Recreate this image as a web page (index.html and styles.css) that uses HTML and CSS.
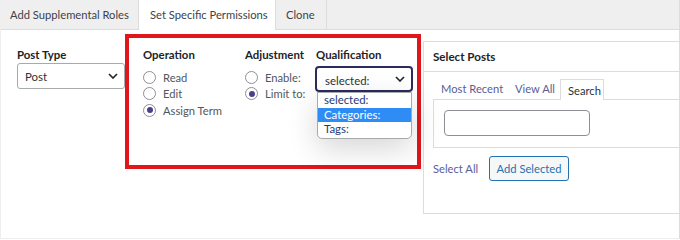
FILE: index.html
```html
<!DOCTYPE html>
<html>
<head>
<meta charset="utf-8">
<link rel="stylesheet" href="styles.css">
</head>
<body>
<div class="frame">
  <nav class="tabs">
    <div class="tab">Add Supplemental Roles</div>
    <div class="tab active">Set Specific Permissions</div>
    <div class="tab">Clone</div>
  </nav>
  <div class="panel">
    <div class="col-post">
      <div class="label">Post Type</div>
      <div class="select post-select">
        <span>Post</span>
        <svg class="chev" width="10" height="6" viewBox="0 0 10 6"><path d="M1 1l4 4 4-4" fill="none" stroke="#1d2327" stroke-width="1.6"/></svg>
      </div>
    </div>
    <div class="highlight">
      <div class="col col-op">
        <div class="label">Operation</div>
        <div class="radios">
          <label class="radio"><span class="dot"></span>Read</label>
          <label class="radio"><span class="dot"></span>Edit</label>
          <label class="radio"><span class="dot on"></span>Assign Term</label>
        </div>
      </div>
      <div class="col col-adj">
        <div class="label">Adjustment</div>
        <div class="radios">
          <label class="radio"><span class="dot"></span>Enable:</label>
          <label class="radio"><span class="dot on"></span>Limit to:</label>
        </div>
      </div>
      <div class="col col-qual">
        <div class="label">Qualification</div>
        <div class="qual-wrap">
          <div class="select qual-select">
            <span>selected:</span>
            <svg class="chev" width="10" height="6" viewBox="0 0 10 6"><path d="M1 1l4 4 4-4" fill="none" stroke="#1d2327" stroke-width="1.6"/></svg>
          </div>
          <ul class="dropdown">
            <li>selected:</li>
            <li class="hl">Categories:</li>
            <li>Tags:</li>
          </ul>
        </div>
      </div>
    </div>
    <div class="posts">
      <div class="posts-head">Select Posts</div>
      <div class="posts-body">
        <div class="ptabs">
          <div class="ptab">Most Recent</div>
          <div class="ptab">View All</div>
          <div class="ptab current">Search</div>
        </div>
        <div class="pbox">
          <div class="search-input"></div>
        </div>
        <div class="actions">
          <span class="link">Select All</span>
          <span class="btn">Add Selected</span>
        </div>
      </div>
    </div>
  </div>
</div>
</body>
</html>
```
FILE: styles.css
```css
* { box-sizing: border-box; }
html, body { margin: 0; padding: 0; background: #fff; }
body {
  font-family: Lato, "Noto Sans", sans-serif;
  font-size: 11px;
  color: #2c3338;
  width: 680px;
  height: 240px;
  overflow: hidden;
  white-space: nowrap;
}
.frame {
  width: 680px;
  height: 239px;
  border-left: 1px solid #eeeeee;
  border-right: 1px solid #dcdcdc;
  border-bottom: 1px solid #eeeeee;
  overflow: hidden;
  display: flex;
  flex-direction: column;
}
.tabs {
  display: flex;
  height: 30px;
  background: #efefef;
  border-bottom: 1px solid #dcdcdc;
  margin-left: -1px;
  flex: none;
}
.tab {
  flex: none;
  height: 29px;
  line-height: 29px;
  padding: 0 10px;
  color: #3c434a;
  border-right: 1px solid #dcdcdc;
  overflow: hidden;
  font-size: 11.2px;
}
.tab:first-child { width: 139px; }
.tab.active {
  background: #fff;
  height: 30px;
  width: 137px;
  padding: 0 11px;
}
.tab:last-child { width: 51px; padding: 0 10px; }
.panel {
  flex: 1;
  display: flex;
  align-items: flex-start;
}
.panel > * { flex: none; }
.label {
  font-weight: 700;
  font-size: 11.4px;
  color: #1d2327;
  line-height: 16px;
  height: 16px;
}
.col-post {
  width: 124px;
  padding-left: 16px;
  margin-top: 17px;
}
.select {
  display: flex;
  align-items: center;
  justify-content: space-between;
  height: 26px;
  border: 1px solid #a7aaad;
  border-radius: 3px;
  background: #fff;
  color: #2c3338;
  font-size: 11.4px;
}
.post-select { width: 108px; padding: 0 6px 0 7px; }
.chev { display: block; }
.highlight {
  display: flex;
  width: 296px;
  height: 135px;
  margin-top: 4px;
  border: 4px solid #e0161b;
  padding: 9px 0 0 14px;
}
.col { flex: none; }
.col-op { width: 102px; }
.col-adj { width: 71px; }
.radios { margin-top: 6px; }
.radio {
  display: flex;
  align-items: center;
  height: 16.5px;
  color: #50575e;
  font-size: 11.2px;
}
.dot {
  width: 13px;
  height: 13px;
  border: 1px solid #8c8f94;
  border-radius: 50%;
  margin-right: 7px;
  position: relative;
  background: #fff;
  flex: none;
}
.dot.on::after {
  content: "";
  position: absolute;
  left: 2.5px;
  top: 2.5px;
  width: 6px;
  height: 6px;
  border-radius: 50%;
  background: #4b3f8c;
}
.qual-wrap {
  position: relative;
  margin-top: 3px;
}
.qual-select {
  width: 98px;
  margin-left: -1px;
  border: 2px solid #2d2a5c;
  border-radius: 4px;
  padding: 0 6px 0 8px;
}
.qual-select span { margin-top: 2px; }
.dropdown {
  position: absolute;
  left: 1px;
  top: 26px;
  width: 95px;
  margin: 0;
  padding: 0 0 1px 0;
  list-style: none;
  background: #fff;
  border: 1px solid #a7aaad;
  border-radius: 0 0 5px 5px;
  box-shadow: 0 10px 30px rgba(0, 0, 0, 0.16);
  z-index: 2;
  font-size: 11.4px;
}
.dropdown li {
  height: 14.5px;
  line-height: 14.5px;
  padding-left: 6px;
  color: #1d3a7a;
}
.dropdown li.hl { background: #2f8cf5; color: #fff; }
.posts {
  margin-top: 11px;
  margin-left: 2px;
  width: 300px;
  height: 173px;
  border: 1px solid #dcdcde;
}
.posts-head {
  height: 30px;
  line-height: 29px;
  padding-left: 9px;
  font-weight: 700;
  font-size: 11.6px;
  color: #1d2327;
  border-bottom: 1px solid #dcdcde;
}
.posts-body { padding-left: 9px; }
.ptabs {
  display: flex;
  margin-top: 6px;
  height: 21px;
  padding-left: 1px;
}
.ptab {
  flex: none;
  padding: 0 7px;
  line-height: 21px;
  color: #5a5d96;
  font-size: 11.2px;
}
.ptab:first-child { width: 74px; }
.ptab:nth-child(2) { width: 52px; }
.ptab.current {
  color: #2c3338;
  border: 1px solid #dcdcde;
  border-bottom: none;
  background: #fff;
  position: relative;
  top: 1px;
  width: 44px;
}
.pbox {
  height: 49px;
  border: 1px solid #dcdcde;
  padding: 10px 0 0 10px;
}
.search-input {
  width: 146px;
  height: 26px;
  border: 1px solid #8c8f94;
  border-radius: 4px;
}
.actions {
  display: flex;
  align-items: center;
  margin-top: 8px;
  font-size: 11.2px;
}
.link { color: #5a5d96; width: 56px; }
.btn {
  display: inline-block;
  width: 80px;
  height: 25px;
  line-height: 23px;
  text-align: center;
  border: 1px solid #2271b1;
  border-radius: 3px;
  background: #f6f7f7;
  color: #2271b1;
}
```
